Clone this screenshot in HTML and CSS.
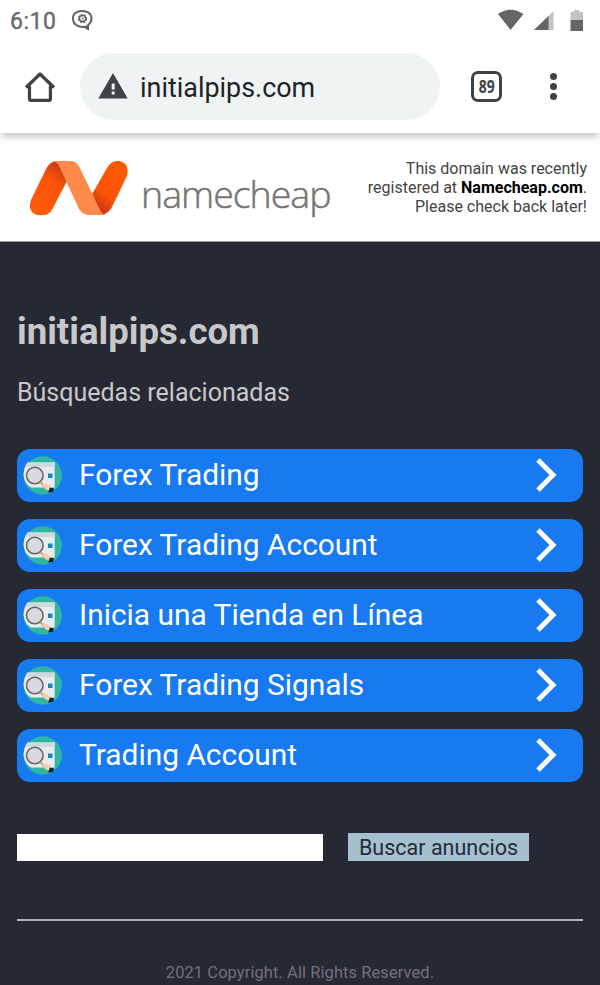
FILE: index.html
```html
<!DOCTYPE html>
<html lang="es">
<head>
<meta charset="utf-8">
<title>initialpips.com</title>
<link rel="stylesheet" href="styles.css">
</head>
<body>
<svg width="0" height="0" class="defs" aria-hidden="true">
  <symbol id="search-page" viewBox="0 0 40 40">
    <circle cx="19.700" cy="19.500" r="19.200" fill="#2fb5a2"/>
    <path d="M4.500 6.500H31.700V31.500H8Q1.500 28 .6 19Q.8 11 4.500 6.500Z" fill="#e6edef"/>
    <path d="M4.500 6.500H31.700v4.500H2.500Z" fill="#cfdadc"/>
    <rect x="25" y="17.500" width="4.500" height="4.500" fill="#1687b8"/>
    <circle cx="11.800" cy="19.500" r="8.300" fill="#d9dadd" stroke="#6d6360" stroke-width="1.500"/>
    <path d="M17.500 26l5 6" stroke="#b9b062" stroke-width="2"/>
    <path d="M19 28q3-1 5 0l6 4-2 4-6-3Z" fill="#f0cdb5"/>
    <path d="M27 31.500l4 1-1 3.500-5 .5Z" fill="#15222b"/>
  </symbol>
  <symbol id="chevron" viewBox="0 0 24 36">
    <path d="M4 3L19 18L4 33" fill="none" stroke="#fff" stroke-width="5"/>
  </symbol>
</svg>
<div class="status">
  <span class="time">6:10</span>
  <svg class="bubble" width="24" height="24" viewBox="0 0 24 24" fill="none" stroke="#626262" stroke-width="2">
    <path d="M16.500 17.200C14 18.200 9.500 18 7 17C3.500 15.700 2 12.500 2 9.500C2 4.500 6 2 11 2C16.500 2 20.500 4.500 20.500 9.500C20.500 12.500 19 14.500 17 16.200V20L12.500 17.500"/>
    <circle cx="11.500" cy="9.500" r="3.800" stroke-dasharray="2.200 .9" stroke-width="1.500"/><circle cx="11.500" cy="9.500" r="3" stroke-width="1.300"/>
    <circle cx="11.500" cy="9.500" r="1" fill="#626262" stroke="none"/>
  </svg>
  <svg class="signals" width="90" height="24" viewBox="0 0 90 24">
    <path d="M1 5Q13.500-3.500 26.500 5L13.500 21Z" fill="#666"/>
    <path d="M37 21L56.500 2V21Z" fill="#c4c4c4"/><path d="M37 21L51.500 7V21Z" fill="#666"/>
    <path d="M73.500 3H77V1h5v2h4v9H73.500Z" fill="#c4c4c4"/><path d="M73.500 11H86V22H73.500Z" fill="#666"/>
  </svg>
</div>
<div class="toolbar">
  <svg class="home" width="32" height="32" viewBox="0 0 32 32" fill="none" stroke="#3f4244" stroke-width="3.200" stroke-linejoin="round">
    <path d="M2 16.500L16 3L30 16.500"/><path d="M5.500 14.500V28Q5.500 29.300 6.800 29.300H25Q26.400 29.300 26.400 28V14.500"/>
  </svg>
  <div class="address">
    <svg width="30" height="26" viewBox="0 0 30 26"><path d="M15 0L29.700 25.500H.3Z" fill="#3f4244"/><path d="M13.700 10.500h3v6h-3zM13.700 18.500h3v3h-3z" fill="#f0f3f4"/></svg>
    <span>initialpips.com</span>
  </div>
  <div class="tabs"><span>89</span></div>
  <div class="dots"><i></i><i></i><i></i></div>
</div>
<header class="brand">
  <svg class="mark" width="100" height="56" viewBox="0 0 100 56">
    <defs>
      <linearGradient id="left" x1=".75" y1="0" x2=".25" y2="1"><stop offset="0" stop-color="#c93716"/><stop offset=".35" stop-color="#fa5208"/><stop offset="1" stop-color="#ff5c08"/></linearGradient>
      <linearGradient id="right" x1=".75" y1="0" x2=".25" y2="1"><stop offset="0" stop-color="#ff5b05"/><stop offset=".65" stop-color="#fa5208"/><stop offset="1" stop-color="#be3118"/></linearGradient>
    </defs>
    <path d="M26 0Q20 2 17 8L2 39Q-2 51 8 54H16Q21 53 24 47L38 20L32 0Z" fill="url(#left)"/>
    <path d="M73 54Q80 52 83 46L98 15Q101 3 91 0Q82-1 78 7L62 35L66 54Z" fill="url(#right)"/>
    <path d="M24 0H43Q48 1 51 7L68 43Q72 53 77 54H59Q53 53 50 48L32 9Q29 1 24 0Z" fill="#ff8a49"/>
  </svg>
  <span class="wordmark">namecheap</span>
  <p class="notice"><span>This domain was recently</span><br><span>registered at <b>Namecheap.com</b>.</span><br><span>Please check back later!</span></p>
</header>
<main>
  <h1>initialpips.com</h1>
  <h2>Búsquedas relacionadas</h2>
  <nav>
    <a><svg class="pic"><use href="#search-page"/></svg><span>Forex Trading</span><svg class="arrow"><use href="#chevron"/></svg></a>
    <a><svg class="pic"><use href="#search-page"/></svg><span>Forex Trading Account</span><svg class="arrow"><use href="#chevron"/></svg></a>
    <a><svg class="pic"><use href="#search-page"/></svg><span>Inicia una Tienda en Línea</span><svg class="arrow"><use href="#chevron"/></svg></a>
    <a><svg class="pic"><use href="#search-page"/></svg><span>Forex Trading Signals</span><svg class="arrow"><use href="#chevron"/></svg></a>
    <a><svg class="pic"><use href="#search-page"/></svg><span>Trading Account</span><svg class="arrow"><use href="#chevron"/></svg></a>
  </nav>
  <form><input type="text" aria-label="Buscar"><button type="button">Buscar anuncios</button></form>
  <footer>2021 Copyright. All Rights Reserved.</footer>
</main>
</body>
</html>
```
FILE: styles.css
```css
* { box-sizing: border-box; }
body { margin: 0; width: 600px; height: 985px; overflow: hidden; display: flex; flex-direction: column; background: #262833; font-family: Roboto, sans-serif; }
.defs { position: absolute; }
svg { display: block; flex: none; }
.status { height: 42px; flex: none; display: flex; align-items: flex-start; background: #fff; padding: 8px 13px 0 10px; }
.time { font-size: 23px; line-height: 27px; font-weight: 400; -webkit-text-stroke: .4px #6a6a6a; color: #6a6a6a; letter-spacing: .5px; width: 61px; }
.bubble { margin-top: 1px; }
.signals { margin: 1px 0 0 auto; }
.toolbar { height: 91px; flex: none; display: flex; align-items: center; background: #fff; padding: 0 43px 2px 24px; box-shadow: 0 5px 7px -1px rgba(0,0,0,.22); z-index: 1; }
.address { width: 360px; height: 67px; margin-left: 24px; border-radius: 34px; background: #f0f3f4; display: flex; align-items: center; gap: 12px; padding-left: 18px; font-size: 26.900px; color: #202326; padding-top: 3px; }
.address svg { margin-top: -5px; }
.tabs { width: 31px; height: 31px; margin-left: 31px; border: 3px solid #3f4244; border-radius: 7px; font: 700 17px/25px "Open Sans", sans-serif; color: #3f4244; display: flex; justify-content: center; }
.tabs span { transform: scaleX(.82); }
.dots { margin-left: auto; display: flex; flex-direction: column; gap: 3px; }
.dots i { width: 7px; height: 7px; border-radius: 50%; background: #3f4244; }
.brand { height: 109px; flex: none; background: #fff; border-bottom: 1px solid #999; display: flex; align-items: flex-start; padding: 27px 13px 0 29px; }
.mark { margin-top: 1px; }
.wordmark { font: 300 37.500px/52px "Open Sans", sans-serif; color: #757575; margin: 8px 0 0 12px; letter-spacing: -1px; -webkit-text-stroke: .5px #757575; }
.notice { margin: 0 0 0 auto; white-space: nowrap; text-align: right; font-size: 16px; line-height: 18.900px; color: #444; }
.notice b { color: #000; }
main { flex: 1; padding: 67px 17px 0; color: #c8c8ca; }
h1 { margin: 0; font-size: 36.600px; line-height: 46px; }
h2 { margin: 23px 0 0; font-size: 25px; line-height: 30px; font-weight: 400; }
nav { margin-top: 41px; display: flex; flex-direction: column; gap: 17px; }
nav a { height: 53px; border-radius: 13px; background: #177af0; display: flex; align-items: center; padding: 0 25px 0 6px; color: #fff; font-size: 29.900px; line-height: 36px; }
nav span { margin: -1px 0 0 16px; }
.pic { width: 40px; height: 40px; }
.arrow { width: 24px; height: 36px; margin: -1px 0 0 auto; }
form { margin-top: 51px; display: flex; gap: 25px; align-items: flex-end; height: 28px; }
input { width: 306px; height: 27px; border: 0; padding: 0; background: #fff; }
button { width: 181px; height: 28px; border: 0; padding: 1px 0 0; background: #a6c0cf; color: #232c37; font: 21.500px/28px Roboto, sans-serif; white-space: nowrap; }
footer { margin-top: 58px; border-top: 2px solid #aeb0ba; padding-top: 42px; text-align: center; font-size: 16.400px; line-height: 20px; letter-spacing: .12px; color: #717279; }
```
